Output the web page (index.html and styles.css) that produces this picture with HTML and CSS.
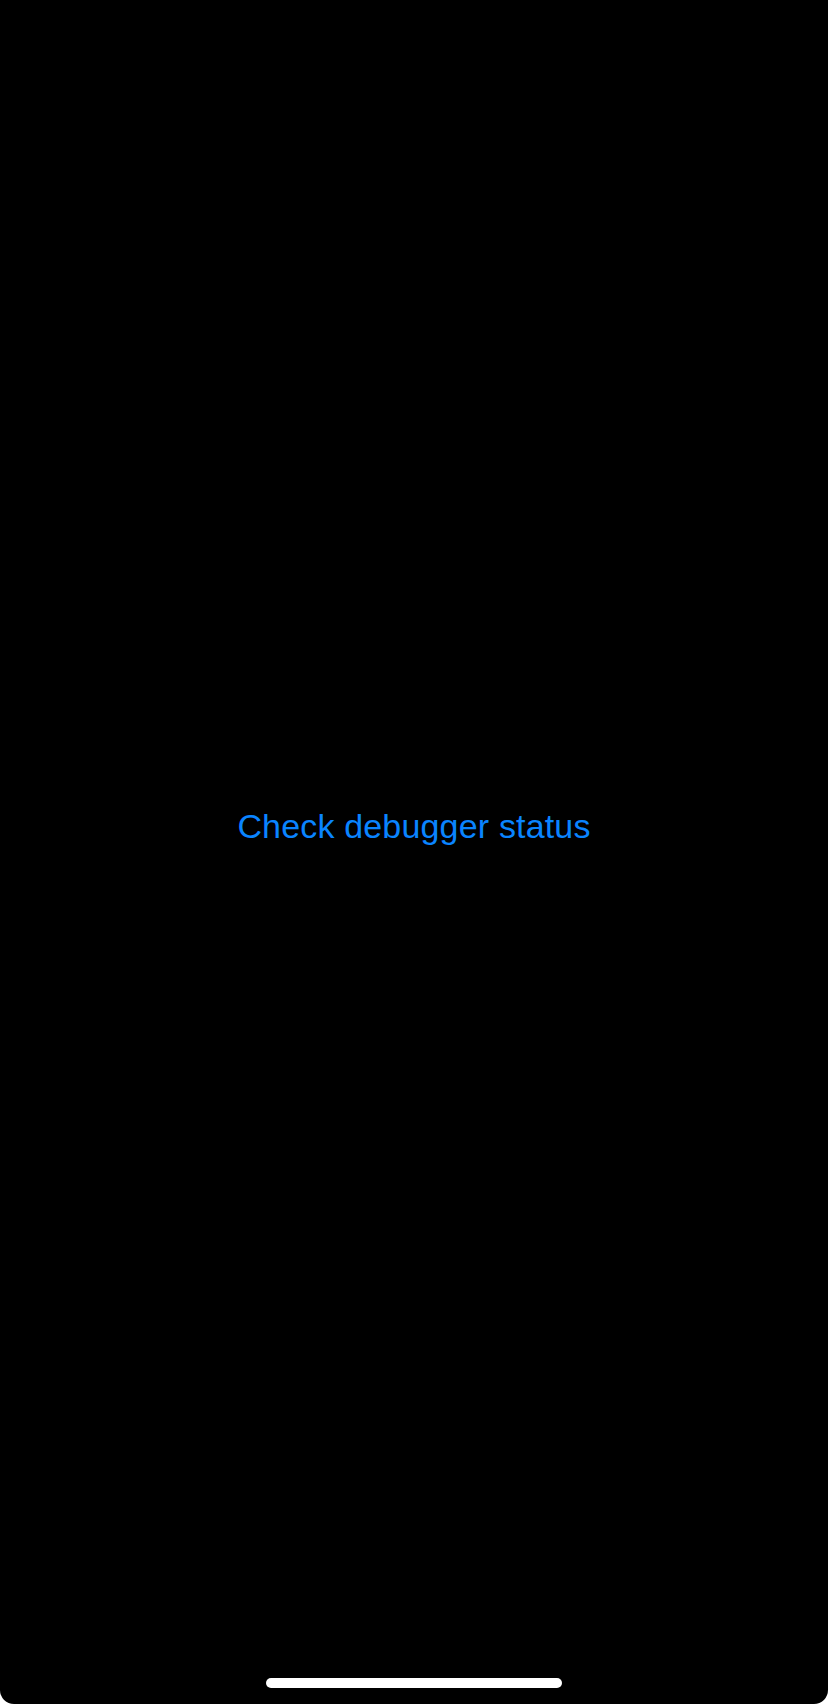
FILE: index.html
```html
<!DOCTYPE html>
<html lang="en">
<head>
<meta charset="utf-8">
<title>Debugger</title>
<link rel="stylesheet" href="styles.css">
</head>
<body>
<div class="screen">
  <main class="content">
    <button class="link-button" type="button">Check debugger status</button>
  </main>
  <div class="home-indicator"></div>
</div>
</body>
</html>
```
FILE: styles.css
```css
html, body {
  margin: 0;
  padding: 0;
  background: #ffffff;
}
.screen {
  width: 828px;
  height: 1704px;
  background: #000000;
  border-bottom-left-radius: 14px;
  border-bottom-right-radius: 14px;
  display: flex;
  flex-direction: column;
  overflow: hidden;
}
.content {
  flex: 1;
  display: flex;
  align-items: center;
  justify-content: center;
  padding-bottom: 26px;
}
.link-button {
  background: none;
  border: 0;
  padding: 0;
  margin: 0;
  font-family: "Liberation Sans", Arial, sans-serif;
  font-size: 34px;
  line-height: 40px;
  letter-spacing: 0.17px;
  color: #0a84ff;
  cursor: pointer;
}
.home-indicator {
  width: 296px;
  height: 10px;
  border-radius: 5px;
  background: #ffffff;
  margin: 0 auto 16px;
}
```
